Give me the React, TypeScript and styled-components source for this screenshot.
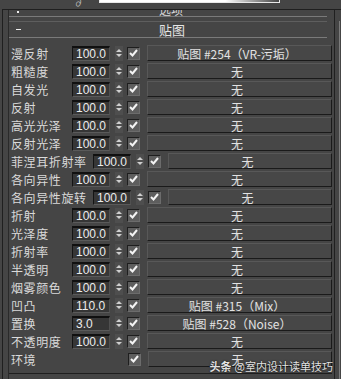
import React from 'react';
import styled, { createGlobalStyle } from 'styled-components';

const GlobalStyle = createGlobalStyle`
	html, body {
		margin: 0;
		padding: 0;
		background: #454545;
	}
	* {
		box-sizing: border-box;
	}
`;

const cjk = `"Noto Sans CJK SC", "Noto Sans", sans-serif`;

const Screen = styled.div`
	position: relative;
	width: 341px;
	height: 379px;
	overflow: hidden;
	background: #454545;
	font-family: ${cjk};
	color: #dedede;
	display: flex;
	flex-direction: column;
`;

const TopStrip = styled.div`
	height: 9px;
	display: flex;
	align-items: flex-start;
	padding-left: 74px;
	gap: 16px;
`;

const TopGlyph = styled.span`
	font-size: 9px;
	line-height: 5px;
	color: #bbb;
`;

const TopField = styled.div`
	width: 181px;
	height: 3px;
	border: 1px solid #e8e8e8;
	border-top: none;
	background: linear-gradient(90deg, #fff 0%, #fff 70%, #444 100%);
`;

const Frame = styled.div`
	flex: 1;
	display: flex;
	margin-left: 2px;
	border-left: 1px solid #1f1f1f;
	border-top: 1px solid #1f1f1f;
`;

const Content = styled.div`
	width: 326px;
	margin-left: 5px;
	border-left: 1px solid #2a2a2a;
	display: flex;
	flex-direction: column;
`;

const OptionsHeader = styled.div`
	height: 7px;
	margin-right: 5px;
	border-bottom: 1px solid #7a7a7a;
	position: relative;
	overflow: hidden;
	display: flex;
	justify-content: center;
`;

const OptionsText = styled.span`
	font-size: 12px;
	line-height: 12px;
	margin-top: -6px;
	margin-left: 6px;
	color: #d8d8d8;
`;

const OptionsDot = styled.span`
	position: absolute;
	left: 8px;
	top: 1px;
	width: 2px;
	height: 2px;
	background: #eee;
`;

const MapsHeader = styled.div`
	height: 17px;
	margin-top: 4px;
	margin-right: 5px;
	border-top: 1px solid #5e5e5e;
	border-bottom: 1px solid #7a7a7a;
	display: flex;
	align-items: center;
	padding-left: 7px;
`;

const Collapse = styled.span`
	width: 5px;
	height: 1px;
	background: #eee;
`;

const MapsTitle = styled.span`
	flex: 1;
	text-align: center;
	font-size: 13px;
	color: #e4e4e4;
	padding-right: 4px;
`;

const Rows = styled.div`
	margin-top: 6px;
	display: flex;
	flex-direction: column;
`;

const Row = styled.div`
	height: 18px;
	display: flex;
	align-items: center;
`;

const Label = styled.span<{ $wide?: boolean }>`
	width: ${(p) => (p.$wide ? 84 : 63)}px;
	padding-left: 2px;
	font-size: 12px;
	letter-spacing: 0.6px;
	white-space: nowrap;
	color: #dadada;
`;

const NumField = styled.div`
	width: 38px;
	height: 15px;
	background: #363636;
	border-top: 2px solid #101010;
	border-left: 1px solid #141414;
	border-bottom: 1px solid #5a5a5a;
	border-right: 1px solid #505050;
	font-family: "Liberation Sans", Arial, sans-serif;
	font-size: 12px;
	line-height: 12px;
	padding-left: 3px;
	color: #ececec;
`;

const Spinner = styled.div`
	width: 8px;
	height: 15px;
	margin-left: 5px;
	background: #4e4e4e;
	display: flex;
	flex-direction: column;
	align-items: center;
	justify-content: center;
	gap: 2px;
`;

const Arrow = styled.span<{ $down?: boolean }>`
	width: 0;
	height: 0;
	border-left: 3px solid transparent;
	border-right: 3px solid transparent;
	${(p) => (p.$down ? 'border-top: 3px solid #cfcfcf;' : 'border-bottom: 3px solid #cfcfcf;')}
`;

const Check = styled.div<{ $gap: number }>`
	width: 13px;
	height: 13px;
	margin-left: ${(p) => p.$gap}px;
	background: #5e5e5e;
	border-top: 1px solid #1e1e1e;
	border-left: 1px solid #1e1e1e;
	border-bottom: 1px solid #6c6c6c;
	border-right: 1px solid #6c6c6c;
	display: flex;
	align-items: center;
	justify-content: center;
`;

const MapButton = styled.div`
	flex: 1;
	height: 16px;
	margin-left: 7px;
	background: #474747;
	border-top: 1px solid #585858;
	border-left: 1px solid #585858;
	border-bottom: 1px solid #1a1a1a;
	border-right: 1px solid #1a1a1a;
	display: flex;
	align-items: center;
	justify-content: center;
	font-size: 12px;
	color: #e2e2e2;
	white-space: nowrap;
	padding-right: 5px;
`;

const BottomLine = styled.div`
	margin-top: 5px;
	border-top: 1px solid #1f1f1f;
`;

const RightGutter = styled.div`
	width: 7px;
	margin-left: 2px;
	border-left: 1px solid #202020;
	display: flex;
	justify-content: flex-end;
`;

const ScrollLine = styled.div`
	width: 1px;
	margin-top: 11px;
	background: #7c7c7c;
	margin-right: 1px;
`;

const Watermark = styled.div`
	position: absolute;
	right: 8px;
	bottom: 5px;
	font-size: 11px;
	color: rgba(255, 255, 255, 0.88);
	text-shadow: 0 0 2px rgba(0, 0, 0, 0.8);
	display: flex;
	gap: 3px;
`;

const Brand = styled.span`
	font-weight: bold;
`;

const CheckMark = () => (
	<svg width='9' height='8' viewBox='0 0 9 8'>
		<polyline points='1,4 3.5,6.5 8,1' fill='none' stroke='#f4f4f4' strokeWidth='2' />
	</svg>
);

interface MapRow {
	label: string;
	value?: string;
	map: string;
	wide?: boolean;
}

const rows: MapRow[] = [
	{ label: '漫反射', value: '100.0', map: '贴图 #254（VR-污垢）' },
	{ label: '粗糙度', value: '100.0', map: '无' },
	{ label: '自发光', value: '100.0', map: '无' },
	{ label: '反射', value: '100.0', map: '无' },
	{ label: '高光光泽', value: '100.0', map: '无' },
	{ label: '反射光泽', value: '100.0', map: '无' },
	{ label: '菲涅耳折射率', value: '100.0', map: '无', wide: true },
	{ label: '各向异性', value: '100.0', map: '无' },
	{ label: '各向异性旋转', value: '100.0', map: '无', wide: true },
	{ label: '折射', value: '100.0', map: '无' },
	{ label: '光泽度', value: '100.0', map: '无' },
	{ label: '折射率', value: '100.0', map: '无' },
	{ label: '半透明', value: '100.0', map: '无' },
	{ label: '烟雾颜色', value: '100.0', map: '无' },
	{ label: '凹凸', value: '110.0', map: '贴图 #315（Mix）' },
	{ label: '置换', value: '3.0', map: '贴图 #528（Noise）' },
	{ label: '不透明度', value: '100.0', map: '无' },
	{ label: '环境', map: '无' },
];

const App: React.FC = () => {
	return (
		<React.Fragment>
			<GlobalStyle />
			<Screen>
				<TopStrip>
					<TopGlyph>∂</TopGlyph>
					<TopField />
				</TopStrip>
				<Frame>
					<Content>
						<OptionsHeader>
							<OptionsDot />
							<OptionsText>选项</OptionsText>
						</OptionsHeader>
						<MapsHeader>
							<Collapse />
							<MapsTitle>贴图</MapsTitle>
						</MapsHeader>
						<Rows>
							{rows.map((r) => (
								<Row key={r.label}>
									<Label $wide={r.wide}>{r.label}</Label>
									{r.value ? (
										<React.Fragment>
											<NumField>{r.value}</NumField>
											<Spinner>
												<Arrow />
												<Arrow $down />
											</Spinner>
										</React.Fragment>
									) : null}
									<Check $gap={r.value ? 4 : 56}>
										<CheckMark />
									</Check>
									<MapButton>{r.map}</MapButton>
								</Row>
							))}
						</Rows>
						<BottomLine />
					</Content>
					<RightGutter>
						<ScrollLine />
					</RightGutter>
				</Frame>
				<Watermark>
					<Brand>头条</Brand>
					<span>@室内设计读单技巧</span>
				</Watermark>
			</Screen>
		</React.Fragment>
	);
};

export default App;
